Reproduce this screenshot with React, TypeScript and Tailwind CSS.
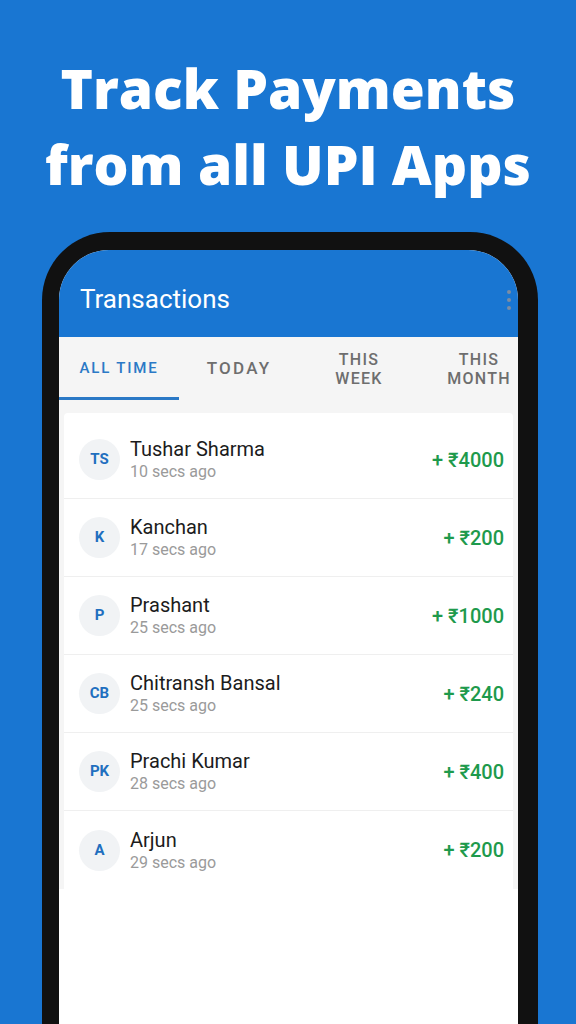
const transactions = [
  { initials: 'TS', name: 'Tushar Sharma', time: '10 secs ago', amount: '4000' },
  { initials: 'K', name: 'Kanchan', time: '17 secs ago', amount: '200' },
  { initials: 'P', name: 'Prashant', time: '25 secs ago', amount: '1000' },
  { initials: 'CB', name: 'Chitransh Bansal', time: '25 secs ago', amount: '240' },
  { initials: 'PK', name: 'Prachi Kumar', time: '28 secs ago', amount: '400' },
  { initials: 'A', name: 'Arjun', time: '29 secs ago', amount: '200' },
];

const tabs = [
  { label: 'ALL TIME', lines: ['ALL TIME'], size: 'text-[15px] tracking-[0.12em] text-[#2b79c6]', active: true },
  { label: 'TODAY', lines: ['TODAY'], size: 'text-[17px] tracking-[0.13em] text-[#6e6e6e]', active: false },
  { label: 'THIS WEEK', lines: ['THIS', 'WEEK'], size: 'text-[16px] tracking-[0.08em] text-[#6e6e6e]', active: false },
  { label: 'THIS MONTH', lines: ['THIS', 'MONTH'], size: 'text-[16px] tracking-[0.08em] text-[#6e6e6e]', active: false },
];

function App() {
  return (
    <div className="flex h-[1024px] w-[576px] flex-col items-center overflow-hidden bg-[#1976d2] font-['Roboto',sans-serif]">
      {/* headline */}
      <h1 className="mt-[50px] text-center font-['Open_Sans',sans-serif] text-[55px] leading-[76px] font-extrabold text-white">
        Track Payments
        <br />
        from all UPI Apps
      </h1>

      {/* phone frame */}
      <div className="mt-[30px] ml-[4px] flex w-[496px] flex-1 flex-col rounded-t-[68px] bg-[#111111] pt-[18px] pr-[20px] pl-[17px]">
        <div className="flex flex-1 flex-col overflow-hidden rounded-t-[50px] bg-white">
          {/* app bar */}
          <div className="flex h-[87px] shrink-0 items-center justify-between bg-[#1976d2] pt-[12px] pr-[7px] pl-[21px]">
            <span className="text-[26px] text-white">Transactions</span>
            <div className="flex flex-col gap-[4px]">
              <span className="h-[4px] w-[4px] rounded-full bg-[#7d8da3]" />
              <span className="h-[4px] w-[4px] rounded-full bg-[#7d8da3]" />
              <span className="h-[4px] w-[4px] rounded-full bg-[#7d8da3]" />
            </div>
          </div>

          {/* tabs */}
          <div className="flex h-[63px] shrink-0 bg-[#f5f5f5]">
            {tabs.map((tab) => (
              <div
                key={tab.label}
                className={`relative flex w-[120px] shrink-0 flex-col items-center justify-center leading-[19px] font-medium ${tab.size}`}
              >
                {tab.lines.map((line) => (
                  <span key={line}>{line}</span>
                ))}
                {tab.active && <span className="absolute right-0 bottom-0 left-0 h-[3px] bg-[#2b79c6]" />}
              </div>
            ))}
          </div>

          {/* list */}
          <div className="bg-[#f5f5f5] px-[5px] pt-[13px]">
            <div className="rounded-t-[4px] bg-white pt-[8px]">
              {transactions.map((t, i) => (
                <div
                  key={t.name}
                  className={`flex h-[78px] items-center pr-[9px] pl-[15px] ${
                    i < transactions.length - 1 ? 'border-b border-[#efefef]' : ''
                  }`}
                >
                  <div className="flex h-[41px] w-[41px] shrink-0 items-center justify-center rounded-full bg-[#f1f3f5] text-[15px] font-bold text-[#1f6fbf]">
                    {t.initials}
                  </div>
                  <div className="ml-[10px] flex flex-1 flex-col">
                    <span className="text-[20px] leading-[24px] text-[#1c1c1c]">{t.name}</span>
                    <span className="text-[16px] leading-[21px] text-[#9a9a9a]">{t.time}</span>
                  </div>
                  <span className="text-[20px] font-medium text-[#1e9a4c]">+ ₹{t.amount}</span>
                </div>
              ))}
            </div>
          </div>
          <div className="flex-1 bg-white" />
        </div>
      </div>
    </div>
  );
}

export default App;
